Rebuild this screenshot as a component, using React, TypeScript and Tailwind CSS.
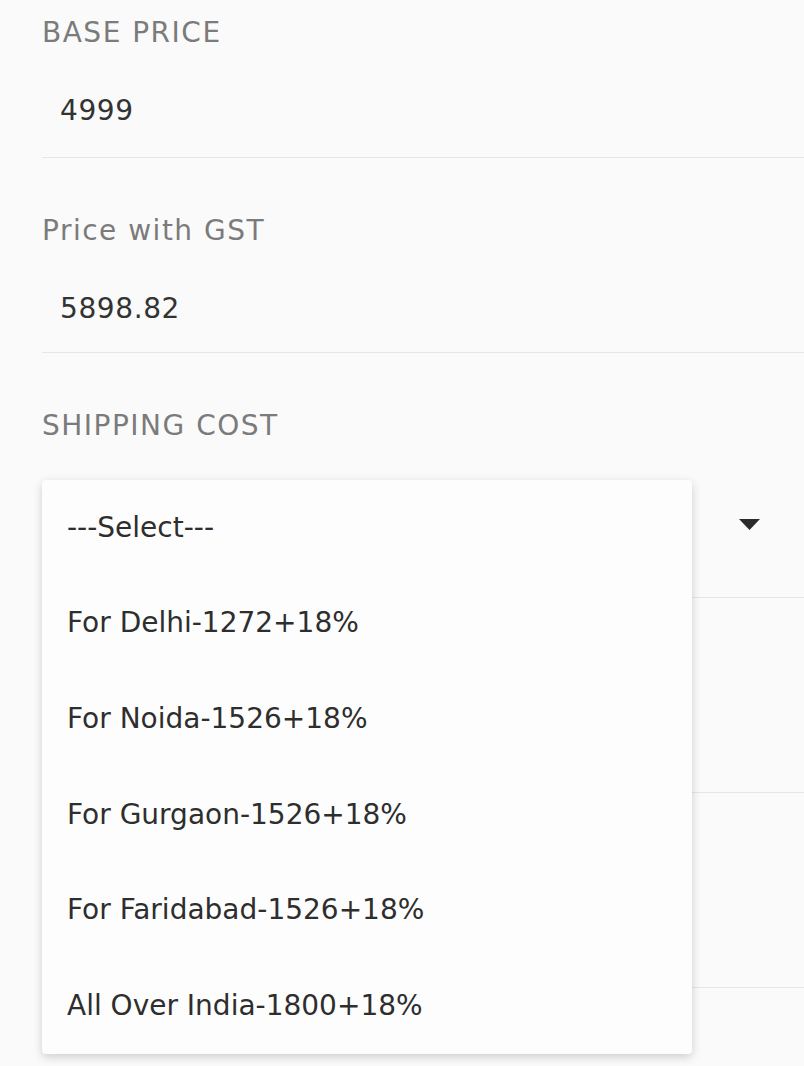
import React from 'react';

const font = { fontFamily: '"DejaVu Sans", sans-serif' };

const options = [
  '---Select---',
  'For Delhi-1272+18%',
  'For Noida-1526+18%',
  'For Gurgaon-1526+18%',
  'For Faridabad-1526+18%',
  'All Over India-1800+18%',
];

const Field: React.FC<{ label: string; value: string; className: string }> = ({ label, value, className }) => (
  <div className={`ml-[42px] border-b border-[#e6e6e6] ${className}`}>
    <div className="text-[28px] leading-[34px] tracking-[1.5px] text-[#7b7b7b]">{label}</div>
    <div className="pl-[18px] mt-[44px] text-[28px] leading-[34px] tracking-[0.6px] text-[#333333]">{value}</div>
  </div>
);

export default function App() {
  return (
    <div className="relative h-[1066px] w-[804px] overflow-hidden bg-[#fafafa]" style={font}>
      {/* price fields */}
      <Field label="BASE PRICE" value="4999" className="h-[158px] pt-[16px]" />
      <Field label="Price with GST" value="5898.82" className="h-[195px] pt-[56px]" />

      {/* shipping select */}
      <div className="ml-[42px] h-[245px] border-b border-[#e6e6e6] pt-[56px]">
        <div className="text-[28px] leading-[34px] tracking-[1.5px] text-[#7b7b7b]">SHIPPING COST</div>
        <div className="mt-[64px] flex h-[34px] items-center justify-end pr-[44px]">
          <svg width="21" height="11" viewBox="0 0 21 11">
            <path d="M0 0 L21 0 L10.5 11 Z" fill="#2b2b2b" />
          </svg>
        </div>
      </div>
      <div className="ml-[42px] h-[195px] border-b border-[#e6e6e6]" />
      <div className="ml-[42px] h-[195px] border-b border-[#e6e6e6]" />

      {/* open dropdown menu */}
      <div className="absolute left-[42px] top-[480px] w-[650px] rounded-[4px] bg-[#fdfdfd] shadow-[0_3px_10px_rgba(0,0,0,0.18)]">
        {options.map((o) => (
          <div key={o} className="flex h-[95.6px] items-center pl-[25px] text-[28px] text-[#2e2e2e]">
            {o}
          </div>
        ))}
      </div>
    </div>
  );
}
